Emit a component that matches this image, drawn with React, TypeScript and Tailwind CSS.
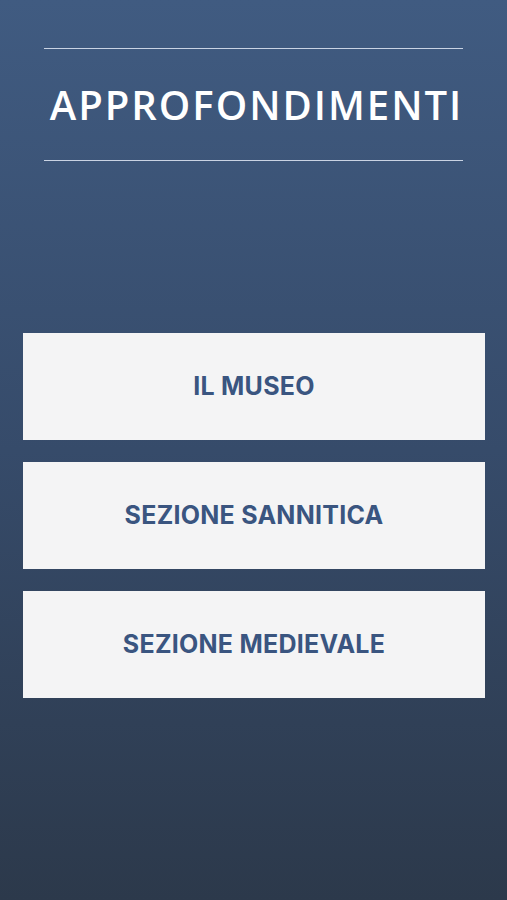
export default function App() {
  const items = ['IL MUSEO', 'SEZIONE SANNITICA', 'SEZIONE MEDIEVALE'];

  return (
    <div className="w-[507px] h-[900px] bg-gradient-to-b from-[#405b81] via-[#364b6a] to-[#2c394b] flex flex-col">
      {/* Header */}
      <div className="mx-[44px] mt-[48px] border-y border-[#c9d3e3] h-[113px] flex items-center justify-center">
        <h1 className="text-white text-[40px] font-semibold tracking-[0.05em] font-['Open_Sans',sans-serif] leading-none pl-[6px]">
          APPROFONDIMENTI
        </h1>
      </div>

      {/* Menu */}
      <div className="mt-[172px] pl-[23px] pr-[22px] flex flex-col gap-[22px]">
        {items.map((label) => (
          <button
            key={label}
            className="h-[107px] w-full bg-[#f4f4f5] text-[#3a5580] text-[25px] font-bold font-['Inter',sans-serif] tracking-[0.01em]"
          >
            {label}
          </button>
        ))}
      </div>
    </div>
  );
}
